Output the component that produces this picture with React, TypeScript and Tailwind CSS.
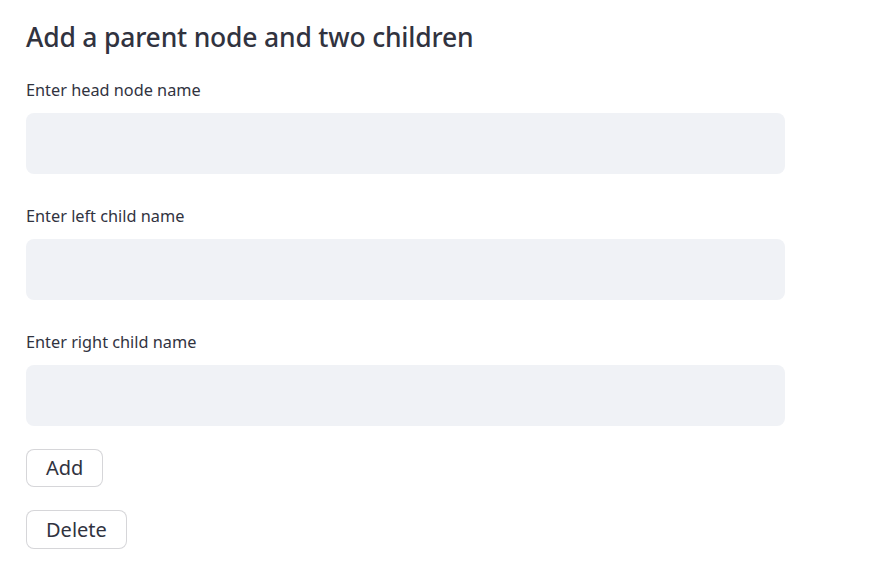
export default function App() {
  const fields = ['Enter head node name', 'Enter left child name', 'Enter right child name']
  return (
    <div className="min-h-screen bg-white pl-[26px] pt-[18px] text-[#31333f]" style={{ fontFamily: '"Noto Sans", sans-serif' }}>
      <h3 className="text-[26.5px] font-medium leading-[38px] tracking-[-0.2px]">Add a parent node and two children</h3>
      <div className="mt-[22px] flex w-[759px] flex-col gap-[30px]">
        {fields.map((label) => (
          <div key={label}>
            <label className="block text-[16.3px] leading-[24px]">{label}</label>
            <input
              className="mt-[11px] block h-[61px] w-full rounded-[8px] bg-[#f0f2f6] px-3 outline-none"
              type="text"
            />
          </div>
        ))}
      </div>
      <div className="mt-[23px] flex flex-col items-start gap-[23px]">
        <button className="h-[38px] rounded-[8px] border border-[#31333f33] bg-white px-[19px] text-[20px]">Add</button>
        <button className="h-[39px] rounded-[8px] border border-[#31333f33] bg-white px-[19px] text-[20px]">Delete</button>
      </div>
    </div>
  )
}
